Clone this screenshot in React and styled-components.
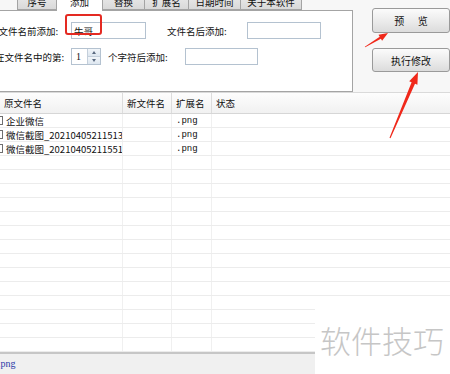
import React from "react";
import styled, { createGlobalStyle } from "styled-components";

const GlobalStyle = createGlobalStyle`
    html, body {
        margin: 0;
        padding: 0;
        overflow: hidden;
        background: #f7f7f7;
    }
    body {
        font-family: "Noto Sans CJK SC", "Liberation Sans", sans-serif;
        font-size: 9.5px;
        color: #111;
    }
`;

const Window = styled.div`
    position: relative;
    width: 450px;
    height: 374px;
    overflow: hidden;
    display: flex;
    flex-direction: column;
    background: #f7f7f7;
`;

const Top = styled.div`
    display: flex;
    height: 92px;
    flex-shrink: 0;
`;

const TabControl = styled.div`
    width: 364px;
    display: flex;
    flex-direction: column;
`;

const TabStrip = styled.div`
    display: flex;
    align-items: flex-end;
    height: 10px;
    padding-left: 17px;
    position: relative;
    z-index: 1;
`;

const Tab = styled.div`
    box-sizing: border-box;
    width: ${(p) => p.w}px;
    height: ${(p) => (p.active ? 18 : 17)}px;
    margin-bottom: ${(p) => (p.active ? -1 : 0)}px;
    display: flex;
    align-items: center;
    justify-content: center;
    padding-bottom: ${(p) => (p.active ? 1 : 0)}px;
    border: 1px solid #a4a4a4;
    border-left: ${(p) => (p.first ? "1px solid #a4a4a4" : "none")};
    border-bottom: ${(p) => (p.active ? "none" : "1px solid #a4a4a4")};
    background: ${(p) =>
        p.active ? "#ffffff" : "linear-gradient(#ececec, #d9d9d9)"};
    white-space: nowrap;
`;

const Panel = styled.div`
    box-sizing: border-box;
    flex: 1;
    background: #fff;
    border: 1px solid #a4a4a4;
    border-left: none;
    padding-top: 11px;
    display: flex;
    flex-direction: column;
    gap: 9px;
`;

const FieldRow = styled.div`
    display: flex;
    align-items: center;
    height: 17px;
    margin-left: ${(p) => p.offset}px;
`;

const Label = styled.span`
    width: ${(p) => p.w}px;
    flex-shrink: 0;
    white-space: nowrap;
    margin-left: ${(p) => p.ml || 0}px;
`;

const TextBox = styled.div`
    box-sizing: border-box;
    width: ${(p) => p.w}px;
    height: 17px;
    border: 1px solid #b4c2d0;
    background: #fff;
    padding-left: 2px;
    display: flex;
    align-items: center;
    flex-shrink: 0;
`;

const Spin = styled.div`
    box-sizing: border-box;
    width: 30px;
    height: 17px;
    border: 1px solid #b4c2d0;
    display: flex;
    flex-shrink: 0;
`;

const SpinValue = styled.span`
    flex: 1;
    padding-left: 4px;
    font-family: "Liberation Serif", serif;
    font-size: 10px;
    line-height: 15px;
`;

const SpinButtons = styled.div`
    width: 12px;
    display: flex;
    flex-direction: column;
    border-left: 1px solid #c4cfdb;
`;

const SpinHalf = styled.div`
    flex: 1;
    display: flex;
    align-items: center;
    justify-content: center;
    background: linear-gradient(#f2f6fa, #dde6ef);
    border-bottom: ${(p) => (p.top ? "1px solid #c4cfdb" : "none")};
`;

const Arrow = styled.span`
    width: 0;
    height: 0;
    border-left: 2.5px solid transparent;
    border-right: 2.5px solid transparent;
    border-bottom: ${(p) => (p.up ? "3px solid #5a6a80" : "none")};
    border-top: ${(p) => (p.up ? "none" : "3px solid #5a6a80")};
`;

const Side = styled.div`
    flex: 1;
    display: flex;
    flex-direction: column;
    padding: 8px 0 0 19px;
    gap: 15px;
`;

const Button = styled.div`
    box-sizing: border-box;
    width: 78px;
    height: ${(p) => p.h}px;
    border: 1px solid #9a9a9a;
    border-radius: 3px;
    background: linear-gradient(#fbfbfb 0%, #ececec 50%, #dcdcdc 100%);
    display: flex;
    align-items: center;
    justify-content: center;
    font-size: 10px;
    white-space: pre;
`;

const Table = styled.div`
    flex: 1;
    overflow: hidden;
    border-top: 1px solid #dadada;
    background: #fff;
`;

const Row = styled.div`
    box-sizing: border-box;
    display: grid;
    grid-template-columns: 123px 49px 40px 1fr;
    height: ${(p) => (p.header ? 21 : 14)}px;
    border-bottom: 1px solid ${(p) => (p.header ? "#d6d6d6" : "#ececec")};
    background: ${(p) => (p.header ? "linear-gradient(#fdfdfd, #f1f1f1)" : "#fff")};
`;

const Cell = styled.div`
    display: flex;
    align-items: center;
    gap: 3px;
    padding-left: 4px;
    border-right: ${(p) => (p.last ? "none" : `1px solid ${p.header ? "#dcdcdc" : "#f0f0f0"}`)};
    white-space: nowrap;
    overflow: hidden;
`;

const Check = styled.span`
    box-sizing: border-box;
    width: 9px;
    height: 9px;
    margin-left: -10px;
    border: 1px solid #6f6f6f;
    background: #fff;
    flex-shrink: 0;
`;

const Ext = styled.span`
    font-family: "Liberation Mono", monospace;
    font-size: 9px;
`;

const StatusBar = styled.div`
    box-sizing: border-box;
    height: 22px;
    flex-shrink: 0;
    border-top: 2px solid #c6c6c6;
    background: #f0f0f0;
    display: flex;
    align-items: center;
    padding-bottom: 1px;
`;

const StatusText = styled.span`
    margin-left: -7px;
    font-family: "Liberation Serif", serif;
    font-size: 10px;
    color: #2b3ba8;
`;

const Highlight = styled.div`
    position: absolute;
    left: 65px;
    top: 14px;
    width: 37px;
    height: 21px;
    box-sizing: border-box;
    border: 2px solid #e42a22;
    border-radius: 3px;
`;

const Overlay = styled.svg`
    position: absolute;
    left: 0;
    top: 0;
    pointer-events: none;
`;

const Watermark = styled.div`
    position: absolute;
    left: 315px;
    top: 300px;
    width: 135px;
    height: 74px;
    background: #fff;
    display: flex;
    align-items: center;
    padding: 4px 0 0 5px;
    box-sizing: border-box;
    font-size: 31px;
    font-weight: 300;
    color: #c6c6c6;
    white-space: nowrap;
`;

const tabs = [
    { label: "序号", w: 40 },
    { label: "添加", w: 46, active: true },
    { label: "替换", w: 42 },
    { label: "扩展名", w: 44 },
    { label: "日期时间", w: 52 },
    { label: "关于本软件", w: 61 },
];

const files = [
    { name: "企业微信", ext: ".png" },
    { name: "微信截图_20210405211513", ext: ".png" },
    { name: "微信截图_20210405211551", ext: ".png" },
];

const App = () => {
    const empty = Array.from({ length: 16 });

    return (
        <Window>
            <GlobalStyle />
            <Top>
                <TabControl>
                    <TabStrip>
                        {tabs.map((t, i) => (
                            <Tab key={t.label} w={t.w} active={t.active} first={i === 0}>
                                {t.label}
                            </Tab>
                        ))}
                    </TabStrip>
                    <Panel>
                        <FieldRow offset={-11}>
                            <Label w={82}>在文件名前添加:</Label>
                            <TextBox w={75}>牛哥</TextBox>
                            <Label w={80} ml={21}>文件名后添加:</Label>
                            <TextBox w={74} />
                        </FieldRow>
                        <FieldRow offset={-5}>
                            <Label w={76}>在文件名中的第:</Label>
                            <Spin>
                                <SpinValue>1</SpinValue>
                                <SpinButtons>
                                    <SpinHalf top>
                                        <Arrow up />
                                    </SpinHalf>
                                    <SpinHalf>
                                        <Arrow />
                                    </SpinHalf>
                                </SpinButtons>
                            </Spin>
                            <Label w={77} ml={7}>个字符后添加:</Label>
                            <TextBox w={73} />
                        </FieldRow>
                    </Panel>
                </TabControl>
                <Side>
                    <Button h={25}>{"预      览"}</Button>
                    <Button h={24}>执行修改</Button>
                </Side>
            </Top>

            <Table>
                <Row header>
                    <Cell header>原文件名</Cell>
                    <Cell header>新文件名</Cell>
                    <Cell header>扩展名</Cell>
                    <Cell header last>状态</Cell>
                </Row>
                {files.map((f) => (
                    <Row key={f.name}>
                        <Cell>
                            <Check />
                            {f.name}
                        </Cell>
                        <Cell />
                        <Cell>
                            <Ext>{f.ext}</Ext>
                        </Cell>
                        <Cell last />
                    </Row>
                ))}
                {empty.map((_, i) => (
                    <Row key={i}>
                        <Cell />
                        <Cell />
                        <Cell />
                        <Cell last />
                    </Row>
                ))}
            </Table>

            <StatusBar>
                <StatusText>*.png</StatusText>
            </StatusBar>

            <Highlight />
            <Overlay width="450" height="374" viewBox="0 0 450 374">
                <polygon
                    fill="#f0281a"
                    points="365.2,47.3 380.9,38.7 382.1,40.7 388,33 378.5,34.7 379.7,36.7 364.8,46.7"
                />
                <polygon
                    fill="#f0281a"
                    points="390.5,138.2 415,83.7 417.4,84.8 418,72 409.2,81.2 411.6,82.3 389.5,137.8"
                />
            </Overlay>
            <Watermark>软件技巧</Watermark>
        </Window>
    );
};

export default App;
